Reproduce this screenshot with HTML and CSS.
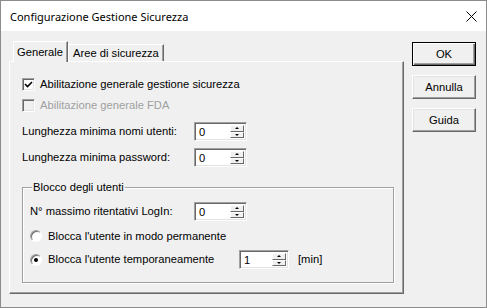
FILE: index.html
```html
<!DOCTYPE html>
<html>
<head>
<meta charset="utf-8">
<link rel="stylesheet" href="styles.css">
</head>
<body>
<div class="window">
  <div class="titlebar">
    <span class="title">Configurazione Gestione Sicurezza</span>
    <svg class="close" width="11" height="11" viewBox="0 0 11 11"><path d="M0.5 0.5L10.5 10.5M10.5 0.5L0.5 10.5" stroke="#000" stroke-width="1" fill="none"/></svg>
  </div>
  <div class="client">
    <div class="tabctl">
      <div class="tabs">
        <div class="tab active">Generale</div>
        <div class="tab">Aree di sicurezza</div>
      </div>
      <div class="panel">
        <div class="check row-cb1">
          <span class="cb"><svg width="9" height="9" viewBox="0 0 9 9"><path d="M1 4L3.5 6.5L8 2" stroke="#000" stroke-width="1.6" fill="none"/></svg></span>
          <span>Abilitazione generale gestione sicurezza</span>
        </div>
        <div class="check disabled row-cb2">
          <span class="cb"></span>
          <span>Abilitazione generale FDA</span>
        </div>
        <div class="field row-f1">
          <span class="lbl">Lunghezza minima nomi utenti:</span>
          <div class="spin"><span class="val">0</span><span class="btns"><span class="sb"><i class="up"></i></span><span class="sb"><i class="down"></i></span></span></div>
        </div>
        <div class="field row-f2">
          <span class="lbl">Lunghezza minima password:</span>
          <div class="spin"><span class="val">0</span><span class="btns"><span class="sb"><i class="up"></i></span><span class="sb"><i class="down"></i></span></span></div>
        </div>
        <div class="group">
          <span class="legend">Blocco degli utenti</span>
          <div class="field row-g1">
            <span class="lbl lbl-g">N° massimo ritentativi LogIn:</span>
            <div class="spin"><span class="val">0</span><span class="btns"><span class="sb"><i class="up"></i></span><span class="sb"><i class="down"></i></span></span></div>
          </div>
          <div class="radio-row row-r1">
            <span class="rb"></span>
            <span>Blocca l'utente in modo permanente</span>
          </div>
          <div class="radio-row row-r2">
            <span class="rb on"><i></i></span>
            <span class="lbl-r">Blocca l'utente temporaneamente</span>
            <div class="spin spin-s"><span class="val">1</span><span class="btns"><span class="sb"><i class="up"></i></span><span class="sb"><i class="down"></i></span></span></div>
            <span class="unit">[min]</span>
          </div>
        </div>
      </div>
    </div>
    <div class="buttons">
      <div class="btn default"><span>OK</span></div>
      <div class="btn">Annulla</div>
      <div class="btn">Guida</div>
    </div>
  </div>
</div>
</body>
</html>
```

FILE: styles.css
```css
html, body {
  margin: 0;
  padding: 0;
  background: #f0f0f0;
}
.window {
  width: 487px;
  height: 308px;
  box-sizing: border-box;
  border: 1px solid #8c8c8c;
  display: flex;
  flex-direction: column;
  font-family: "Liberation Sans", Arial, sans-serif;
  font-size: 11.2px;
  color: #000;
}
.titlebar {
  height: 30px;
  background: #fff;
  display: flex;
  align-items: center;
  justify-content: space-between;
  padding: 0 9px 0 9px;
}
.title {
  font-family: "Noto Sans", "Open Sans", sans-serif;
  font-size: 11px;
  color: #000;
  margin-top: 1px;
}
.close {
  margin-right: 0;
  margin-top: 1px;
}
.client {
  flex: 1;
  background: #f0f0f0;
  display: flex;
  padding: 11px 10px 13px 8px;
  gap: 8px;
}
.tabctl {
  width: 395px;
  display: flex;
  flex-direction: column;
}
.tabs {
  height: 19px;
  display: flex;
  align-items: flex-end;
  padding-left: 4px;
  position: relative;
  z-index: 1;
}
.tab {
  box-sizing: border-box;
  line-height: 13px;
  border: 1px solid #fff;
  border-bottom: none;
  border-right-color: #696969;
  box-shadow: inset -1px 0 0 #a0a0a0;
  background: #f0f0f0;
  padding: 2px 4px 0 4px;
  height: 17px;
}
.tab.active {
  height: 21px;
  margin-bottom: -1px;
  padding: 4px 4px 0 3px;
}
.panel {
  flex: 1;
  box-sizing: border-box;
  border-top: 1px solid #fff;
  border-left: 1px solid #fff;
  border-right: 1px solid #696969;
  border-bottom: 1px solid #696969;
  box-shadow: inset -1px -1px 0 #a0a0a0;
  display: flex;
  flex-direction: column;
  padding: 16px 0 0 12px;
}
.check {
  display: flex;
  align-items: center;
  height: 13px;
  line-height: 13px;
  gap: 5px;
}
.row-cb2 { margin-top: 8px; }
.cb {
  width: 13px;
  height: 13px;
  box-sizing: border-box;
  border: 1px solid;
  border-color: #a0a0a0 #fff #fff #a0a0a0;
  box-shadow: inset 1px 1px 0 #696969, inset -1px -1px 0 #e3e3e3;
  background: #fff;
  display: flex;
  align-items: center;
  justify-content: center;
}
.disabled { color: #a0a0a0; }
.disabled .cb {
  background: #f0f0f0;
}
.field {
  display: flex;
  align-items: center;
  height: 19px;
}
.row-f1 { margin-top: 10px; }
.row-f2 { margin-top: 7px; }
.lbl { width: 172px; line-height: 13px; }
.lbl-g { width: 164px; }
.spin {
  width: 53px;
  height: 19px;
  box-sizing: border-box;
  border: 1px solid;
  border-color: #a0a0a0 #fff #fff #a0a0a0;
  box-shadow: inset 1px 1px 0 #696969, inset -1px -1px 0 #e3e3e3;
  background: #fff;
  display: flex;
  padding: 2px 2px 2px 2px;
}
.spin-s { width: 50px; }
.val {
  flex: 1;
  line-height: 15px;
  padding-left: 2px;
}
.btns {
  width: 14px;
  display: flex;
  flex-direction: column;
}
.sb {
  flex: 1;
  box-sizing: border-box;
  background: #f0f0f0;
  border: 1px solid;
  border-color: #fff #696969 #696969 #fff;
  display: flex;
  align-items: center;
  justify-content: center;
}
.sb i {
  display: block;
  width: 0;
  height: 0;
  border-left: 2px solid transparent;
  border-right: 2px solid transparent;
}
.sb i.up { border-bottom: 2px solid #000; }
.sb i.down { border-top: 2px solid #000; }
.group {
  width: 372px;
  box-sizing: border-box;
  margin-top: 20px;
  border: 1px solid #a0a0a0;
  box-shadow: 1px 1px 0 #fff, inset 1px 1px 0 #fff;
  display: flex;
  flex-direction: column;
  padding: 0 0 13px 7px;
}
.legend {
  align-self: flex-start;
  margin-top: -7px;
  margin-left: 2px;
  padding: 0 1px;
  line-height: 13px;
  background: #f0f0f0;
}
.row-g1 { margin-top: 8px; }
.radio-row {
  display: flex;
  align-items: center;
  line-height: 13px;
}
.row-r1 { height: 12px; margin-top: 9px; gap: 6px; }
.row-r2 { height: 19px; margin-top: 8px; }
.rb {
  width: 12px;
  height: 12px;
  box-sizing: border-box;
  border-radius: 50%;
  border: 1px solid;
  border-color: #a0a0a0 #fff #fff #a0a0a0;
  box-shadow: inset 1px 1px 0 #696969;
  background: #fff;
  display: flex;
  align-items: center;
  justify-content: center;
}
.rb i {
  display: block;
  width: 4px;
  height: 4px;
  border-radius: 50%;
  background: #000;
}
.row-r2 .rb { margin-right: 6px; }
.lbl-r { width: 191px; }
.unit { margin-left: 9px; }
.buttons {
  display: flex;
  flex-direction: column;
  gap: 9px;
}
.btn {
  width: 64px;
  height: 24px;
  box-sizing: border-box;
  border: 1px solid;
  border-color: #fff #696969 #696969 #fff;
  box-shadow: inset -1px -1px 0 #a0a0a0, inset 1px 1px 0 #e3e3e3;
  display: flex;
  align-items: center;
  justify-content: center;
  line-height: 13px;
}
.btn.default {
  border: 1px solid #000;
  box-shadow: inset 1px 1px 0 #fff, inset -1px -1px 0 #696969, inset -2px -2px 0 #a0a0a0;
}
```
